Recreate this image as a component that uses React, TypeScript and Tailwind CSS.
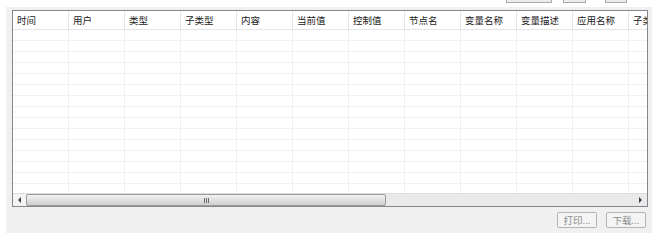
import React from 'react';

const columns = ['时间', '用户', '类型', '子类型', '内容', '当前值', '控制值', '节点名', '变量名称', '变量描述', '应用名称', '子类型'];
const rows = Array.from({ length: 15 });

const font = { fontFamily: '"Noto Sans CJK SC", "Liberation Sans", sans-serif' };

const App: React.FC = () => {
  return (
    <div className="w-[659px] h-[240px] bg-white overflow-hidden" style={font}>
      {/* clipped toolbar buttons from the area above */}
      <div className="h-[7px] relative">
        <div className="absolute top-0 left-[506px] w-[46px] h-[3px] border-b border-x border-[#a9a9a9] bg-[#ececec]" />
        <div className="absolute top-0 left-[563px] w-[23px] h-[3px] border-b border-x border-[#a9a9a9] bg-[#ececec]" />
        <div className="absolute top-0 left-[605px] w-[22px] h-[3px] border-b border-x border-[#a9a9a9] bg-[#ececec]" />
      </div>

      <div className="ml-[6px] w-[646px] h-[226px] bg-[#f0f0f0] pt-[3px] pl-[6px] flex flex-col">
        {/* list view */}
        <div className="w-[636px] h-[197px] border border-[#828790] bg-white flex flex-col overflow-hidden">
          <div className="flex-1 overflow-hidden">
            <div className="flex h-[19px] border-b border-[#e5e5e5]">
              {columns.map((c, i) => (
                <div
                  key={i}
                  className="w-[56px] shrink-0 border-r border-[#e5e5e5] pl-[4px] text-[9.5px] leading-[19px] text-[#222] whitespace-nowrap overflow-hidden"
                >
                  {c}
                </div>
              ))}
            </div>
            {rows.map((_, i) => (
              <div key={i} className="flex h-[11px] border-b border-[#f0f0f0]">
                {columns.map((_c, j) => (
                  <div key={j} className="w-[56px] shrink-0 border-r border-[#f0f0f0]" />
                ))}
              </div>
            ))}
          </div>

          {/* horizontal scrollbar */}
          <div className="h-[13px] flex items-stretch bg-[#e9e9e9] border-t border-[#dcdcdc]">
            <div className="w-[13px] flex items-center justify-center bg-[#f4f4f4]">
              <div className="w-0 h-0 border-y-[3px] border-y-transparent border-r-[3px] border-r-[#404040]" />
            </div>
            <div className="w-[360px] bg-gradient-to-b from-[#f2f2f2] to-[#cfcfcf] border border-[#9c9c9c] rounded-[2px] flex items-center justify-center">
              <div className="flex gap-[1px]">
                <div className="w-[1px] h-[5px] bg-[#6b6b6b]" />
                <div className="w-[1px] h-[5px] bg-[#6b6b6b]" />
                <div className="w-[1px] h-[5px] bg-[#6b6b6b]" />
              </div>
            </div>
            <div className="flex-1" />
            <div className="w-[13px] flex items-center justify-center">
              <div className="w-0 h-0 border-y-[3px] border-y-transparent border-l-[3px] border-l-[#404040]" />
            </div>
          </div>
        </div>

        {/* bottom buttons */}
        <div className="flex justify-end gap-[9px] pr-[6px] mt-[5px]">
          <button className="w-[40px] h-[16px] border border-[#b5b5b5] rounded-[2px] bg-[#f4f4f4] text-[9.5px] leading-[14px] text-[#8a8a8a]">
            打印...
          </button>
          <button className="w-[40px] h-[16px] border border-[#b5b5b5] rounded-[2px] bg-[#f4f4f4] text-[9.5px] leading-[14px] text-[#8a8a8a]">
            下载...
          </button>
        </div>
      </div>
    </div>
  );
};

export default App;
